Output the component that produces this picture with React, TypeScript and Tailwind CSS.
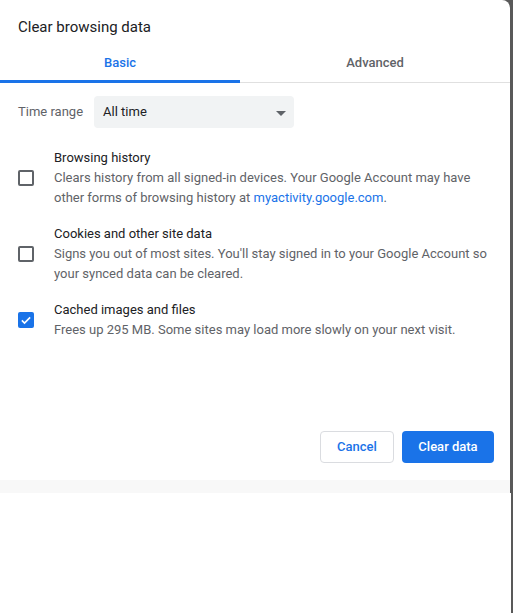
import { useState } from 'react';

type Item = {
  id: string;
  title: string;
  desc: React.ReactNode;
};

const items: Item[] = [
  {
    id: 'history',
    title: 'Browsing history',
    desc: (
      <>
        Clears history from all signed-in devices. Your Google Account may have other forms of browsing history at{' '}
        <span className="text-[#1a73e8]">myactivity.google.com</span>.
      </>
    ),
  },
  {
    id: 'cookies',
    title: 'Cookies and other site data',
    desc: "Signs you out of most sites. You'll stay signed in to your Google Account so your synced data can be cleared.",
  },
  {
    id: 'cache',
    title: 'Cached images and files',
    desc: 'Frees up 295 MB. Some sites may load more slowly on your next visit.',
  },
];

function Checkbox({ checked, onChange }: { checked: boolean; onChange: () => void }) {
  return (
    <button
      onClick={onChange}
      className={`w-4 h-4 shrink-0 rounded-[2px] flex items-center justify-center ${
        checked ? 'bg-[#1a73e8]' : 'border-2 border-[#5f6368] bg-white'
      }`}
    >
      {checked && (
        <svg viewBox="0 0 16 16" className="w-3 h-3">
          <path d="M2.5 8.5l3.5 3.5 7.5-7.5" fill="none" stroke="white" strokeWidth="2.2" />
        </svg>
      )}
    </button>
  );
}

export default function App() {
  const [tab, setTab] = useState<'basic' | 'advanced'>('basic');
  const [checked, setChecked] = useState<Record<string, boolean>>({
    history: false,
    cookies: false,
    cache: true,
  });

  return (
    <div className="w-[513px] min-h-[613px] bg-white font-['Roboto','Liberation_Sans',sans-serif] flex flex-col">
      <div className="flex bg-[#595959]">
        <div className="w-[510px] bg-white rounded-tr-[8px] flex flex-col">
          <h1 className="pt-[17px] px-[18px] text-[15px] leading-[20px] text-[#202124]">Clear browsing data</h1>

          {/* Tabs */}
          <div className="mt-[7px] flex border-b border-[#e0e0e0]">
            <button
              onClick={() => setTab('basic')}
              className={`w-[240px] text-[13px] font-medium ${
                tab === 'basic' ? 'text-[#1a73e8] border-b-[3px] border-[#1a73e8] -mb-px h-[39px] pt-[1px]' : 'text-[#5f6368] h-[38px]'
              }`}
            >
              Basic
            </button>
            <button
              onClick={() => setTab('advanced')}
              className={`flex-1 text-[13px] font-medium ${
                tab === 'advanced' ? 'text-[#1a73e8] border-b-[3px] border-[#1a73e8] -mb-px h-[39px] pt-[1px]' : 'text-[#5f6368] h-[38px]'
              }`}
            >
              Advanced
            </button>
          </div>

          {/* Time range */}
          <div className="mt-[13px] px-[18px] flex items-center gap-[11px]">
            <span className="text-[13px] text-[#5f6368]">Time range</span>
            <div className="w-[200px] h-[32px] rounded-[4px] bg-[#f1f3f4] flex items-center justify-between pl-[9px] pr-[8px]">
              <span className="text-[13px] text-[#202124]">All time</span>
              <svg viewBox="0 0 10 5" className="w-[10px] h-[5px] mt-[2px]">
                <path d="M0 0h10L5 5z" fill="#5f6368" />
              </svg>
            </div>
          </div>

          {/* Data types */}
          <div className="mt-[20px] flex flex-col gap-[16px]">
            {items.map((item) => (
              <div key={item.id} className="flex items-center pl-[18px] pr-[16px] gap-[20px]">
                <Checkbox
                  checked={checked[item.id]}
                  onChange={() => setChecked((prev) => ({ ...prev, [item.id]: !prev[item.id] }))}
                />
                <div className="flex flex-col">
                  <span className="text-[13px] leading-[20px] text-[#202124]">{item.title}</span>
                  <p className="text-[13px] leading-[20px] text-[#5f6368]">{item.desc}</p>
                </div>
              </div>
            ))}
          </div>

          {/* Footer */}
          <div className="mt-[91px] pb-[17px] pr-[16px] flex justify-end gap-[8px]">
            <button className="w-[74px] h-[32px] rounded-[4px] border border-[#dadce0] text-[13px] font-medium text-[#1a73e8] bg-white">
              Cancel
            </button>
            <button className="w-[92px] h-[32px] rounded-[4px] bg-[#1a73e8] text-[13px] font-medium text-white">
              Clear data
            </button>
          </div>
          <div className="h-[13px] bg-[#f8f8f8]" />
        </div>
      </div>
      <div className="flex-1 flex justify-end">
        <div className="w-[2px] bg-[#595959]" />
      </div>
    </div>
  );
}
